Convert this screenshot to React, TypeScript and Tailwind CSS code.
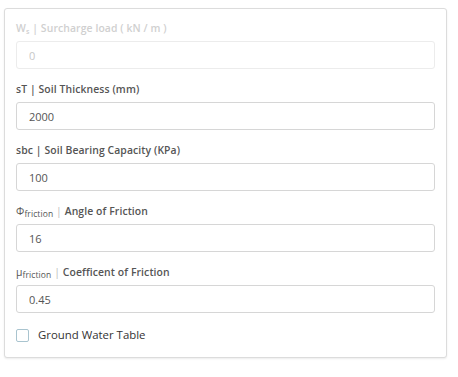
import React from "react";

interface Field {
  key: string;
  label: React.ReactNode;
  value: string;
  disabled?: boolean;
}

const fields: Field[] = [
  {
    key: "ws",
    label: (
      <>
        W<sub className="text-[7px] align-baseline relative top-[2px]">s</sub> | Surcharge load ( kN / m )
      </>
    ),
    value: "0",
    disabled: true,
  },
  { key: "st", label: "sT | Soil Thickness (mm)", value: "2000" },
  { key: "sbc", label: "sbc | Soil Bearing Capacity (KPa)", value: "100" },
  {
    key: "phi",
    label: (
      <>
        <span className="font-normal">Φ</span>
        <sub className="text-[8.5px] font-normal align-baseline relative top-[2px]">friction</sub>{" "}
        <span className="text-[#bbb] font-normal">|</span> Angle of Friction
      </>
    ),
    value: "16",
  },
  {
    key: "mu",
    label: (
      <>
        <span className="font-normal">μ</span>
        <sub className="text-[8.5px] font-normal align-baseline relative top-[2px]">friction</sub>{" "}
        <span className="text-[#bbb] font-normal">|</span> Coefficent of Friction
      </>
    ),
    value: "0.45",
  },
];

export default function App() {
  return (
    <div className="w-[458px] h-[377px] bg-white pt-2 pl-1" style={{ fontFamily: '"Open Sans", "Liberation Sans", sans-serif' }}>
      <div className="w-[443px] h-[350px] bg-white border border-[#dcdcdc] rounded-[3px] shadow-[0_1px_2px_rgba(0,0,0,0.08)] px-[11px] pt-[13px] flex flex-col gap-[14px]">
        {fields.map((f) => (
          <div key={f.key} className="flex flex-col">
            <label
              className={`text-[10.4px] leading-[12px] font-semibold tracking-[0.1px] mb-[7px] whitespace-nowrap ${
                f.disabled ? "text-[#d0d0d0]" : "text-[#555]"
              }`}
            >
              {f.label}
            </label>
            <input
              type="text"
              readOnly
              disabled={f.disabled}
              value={f.value}
              className={`h-[28px] w-full rounded-[3px] border px-[12px] text-[11px] outline-none ${
                f.disabled
                  ? "border-[#ececec] bg-white text-[#c8c8c8]"
                  : "border-[#d6d6d6] bg-white text-[#555]"
              }`}
            />
          </div>
        ))}
        <label className="flex items-center gap-[9px] mt-[1px]">
          <span className="w-[13px] h-[13px] border border-[#a9c4cf] rounded-[2px] bg-white" />
          <span className="text-[11.4px] leading-[14px] text-[#333]">Ground Water Table</span>
        </label>
      </div>
    </div>
  );
}
